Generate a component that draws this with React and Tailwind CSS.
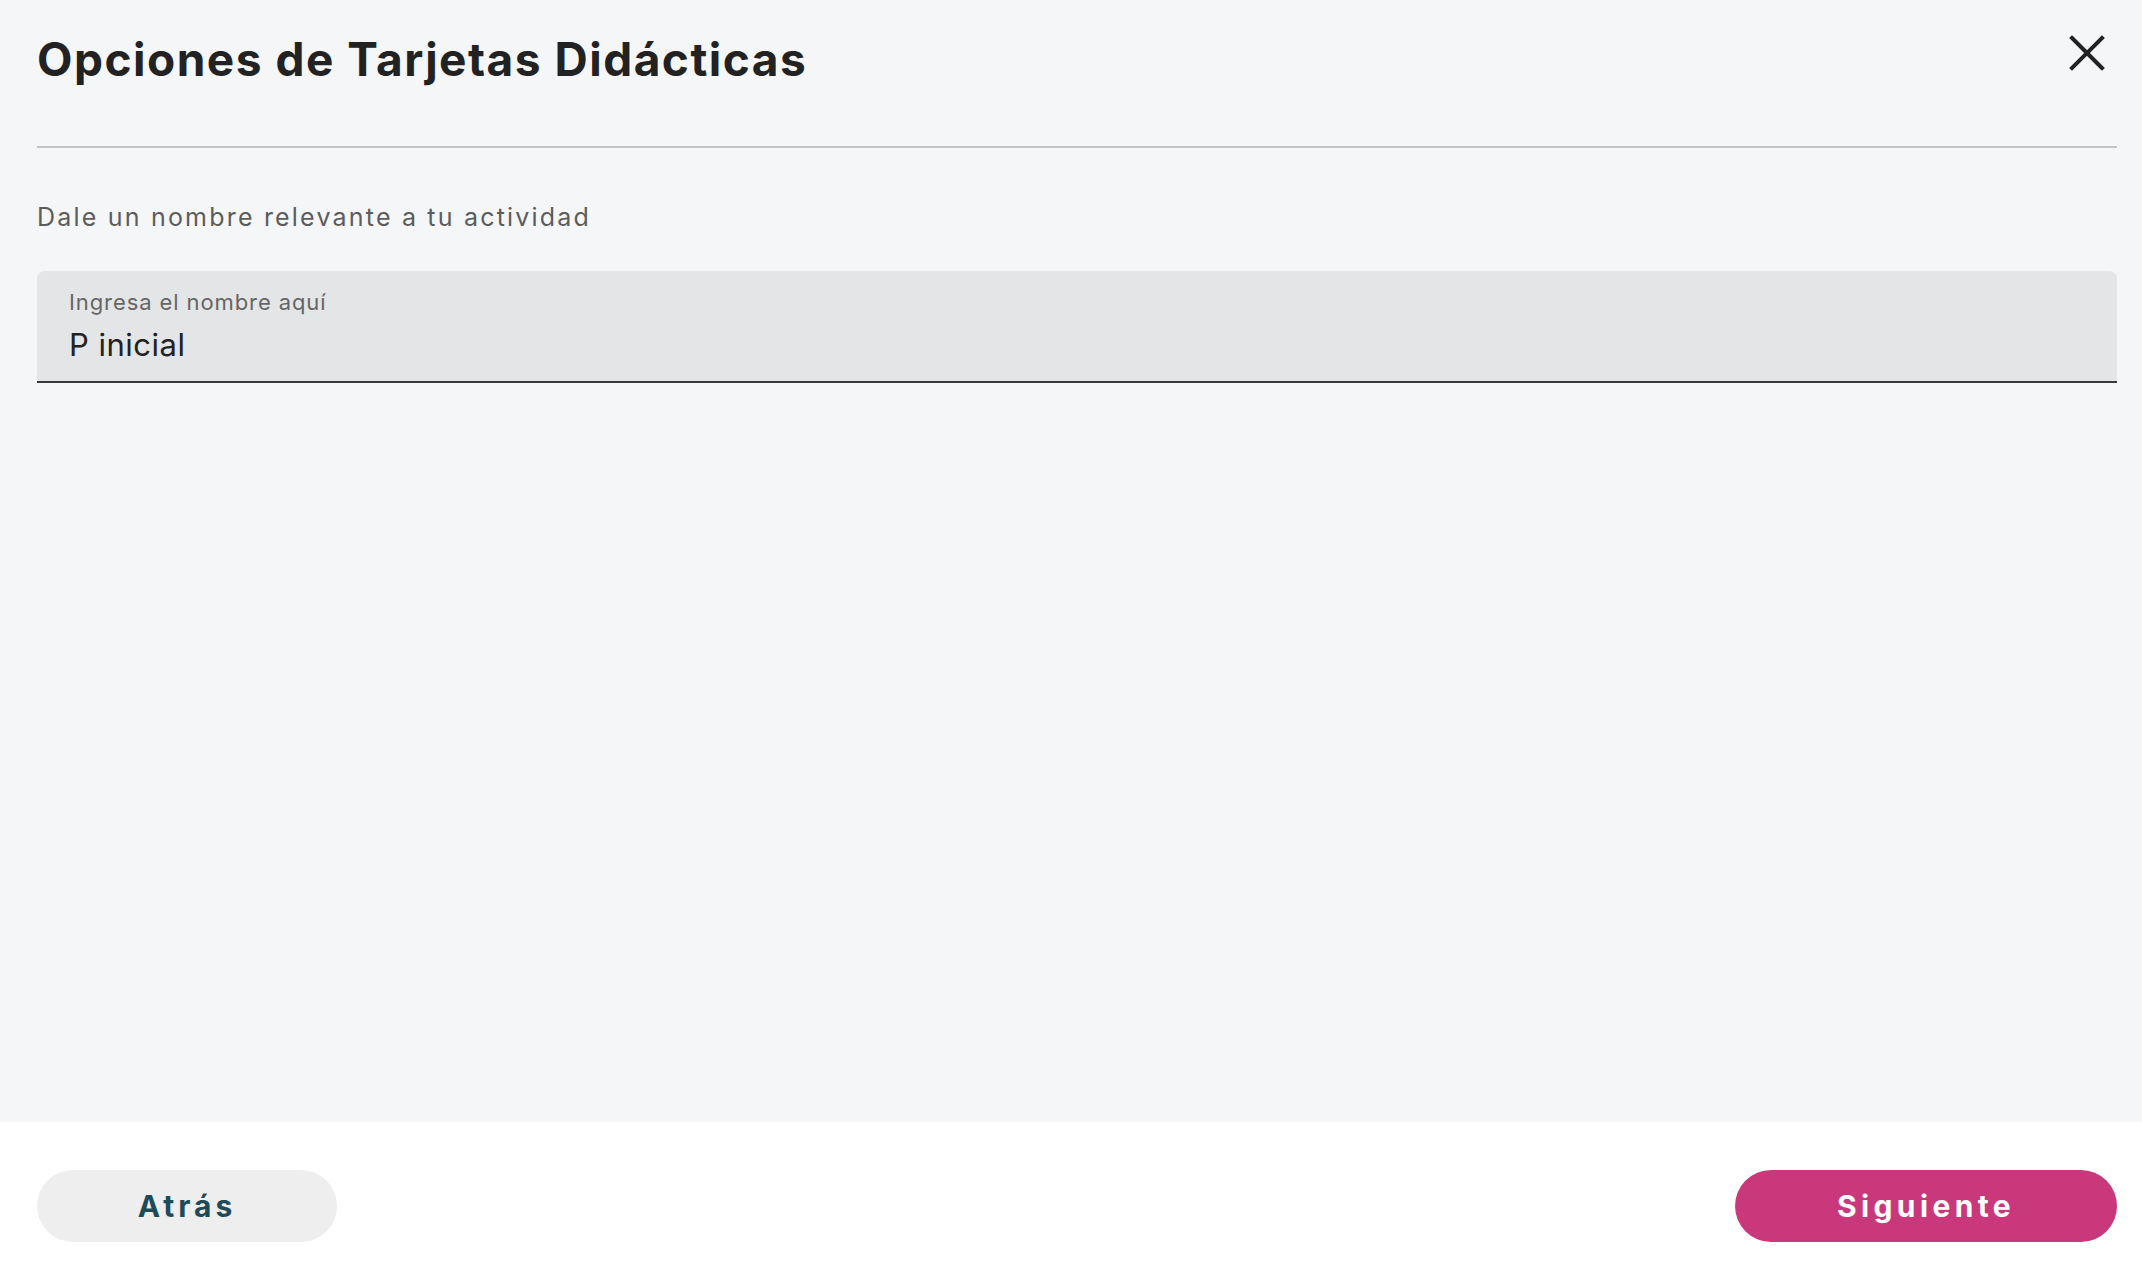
import React, { useState } from "react";

const font = { fontFamily: "Inter, 'Noto Sans', sans-serif" };

const CloseIcon = () => (
  <svg width="36" height="36" viewBox="0 0 36 36" fill="none">
    <path
      d="M3 3 L33 33 M33 3 L3 33"
      stroke="#222222"
      strokeWidth="4"
      strokeLinecap="square"
    />
  </svg>
);

const App = () => {
  const [name, setName] = useState("P inicial");

  return (
    <div className="flex flex-col h-screen w-full bg-white" style={font}>
      <div className="flex-1 bg-[#f5f6f8] pl-[37px] pr-[25px]">
        {/* Header */}
        <div className="flex items-start justify-between pt-[30px] h-[148px] border-b-2 border-[#c4c4c4]">
          <h1 className="text-[46px] leading-[58px] font-bold text-[#222222] tracking-[1.5px]">
            Opciones de Tarjetas Didácticas
          </h1>
          <button className="mt-[5px] mr-[12px] w-[36px] h-[36px] flex items-center justify-center">
            <CloseIcon />
          </button>
        </div>

        {/* Name field */}
        <p className="mt-[53px] text-[25px] leading-[32px] text-[#5c5c5c] tracking-[2.2px]">
          Dale un nombre relevante a tu actividad
        </p>
        <div className="mt-[38px] h-[112px] bg-[#e4e5e7] rounded-t-[8px] border-b-2 border-[#3a3a3a] px-[32px] pt-[17px]">
          <label className="block text-[22px] leading-[28px] text-[#666666] tracking-[0.9px]">
            Ingresa el nombre aquí
          </label>
          <input
            type="text"
            value={name}
            onChange={(e) => setName(e.target.value)}
            className="block w-full bg-transparent outline-none text-[31px] leading-[40px] text-[#222222] tracking-[0.5px] mt-[9px]"
          />
        </div>
      </div>

      {/* Footer */}
      <div className="h-[148px] flex items-start justify-between pt-[48px] pl-[37px] pr-[25px] bg-white">
        <button className="w-[300px] h-[72px] rounded-full bg-[#eeeeee] text-[#1f4a58] text-[30px] font-bold tracking-[4px]">
          Atrás
        </button>
        <button className="w-[382px] h-[72px] rounded-full bg-[#c9387a] text-white text-[30px] font-bold tracking-[4.4px]">
          Siguiente
        </button>
      </div>
    </div>
  );
};

export default App;
